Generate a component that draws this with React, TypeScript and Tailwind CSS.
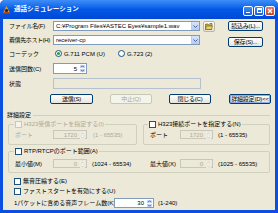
import React from 'react';

const FONT = "font-['Liberation_Sans','Noto_Sans_CJK_JP',sans-serif]";

const XPButton: React.FC<{ w: string; disabled?: boolean; focused?: boolean; children: React.ReactNode }> = ({ w, disabled, focused, children }) => (
  <div
    className={`${w} h-[10px] rounded-[2px] border flex items-center justify-center text-[6px] leading-none whitespace-nowrap tracking-[-0.2px] ${
      disabled
        ? 'border-[#C9C7BA] bg-[#F5F4EA] text-[#ACA899]'
        : focused
          ? 'border-[#003C74] bg-gradient-to-b from-[#FFFFFF] to-[#E3E2DA] text-black shadow-[inset_0_0_0_1px_#8FAEEA]'
          : 'border-[#003C74] bg-gradient-to-b from-[#FFFFFF] to-[#E6E5DE] text-black'
    }`}
  >
    {children}
  </div>
);

const Combo: React.FC<{ value: string }> = ({ value }) => (
  <div className="w-[147px] h-[10px] border border-[#7F9DB9] bg-white flex items-center">
    <span className="flex-1 pl-[2px] text-[6px] leading-none whitespace-nowrap overflow-hidden">{value}</span>
    <div className="w-[8px] h-full bg-gradient-to-b from-[#D8E4FC] to-[#B4CAF6] border-l border-[#B9CBF3] flex items-center justify-center">
      <svg width="5" height="3" viewBox="0 0 5 3">
        <path d="M0.5 0.5 L2.5 2.5 L4.5 0.5" fill="none" stroke="#4D6185" strokeWidth="1" />
      </svg>
    </div>
  </div>
);

const Spin: React.FC<{ value: string; w: string; disabled?: boolean; h?: string }> = ({ value, w, disabled, h = 'h-[9px]' }) => (
  <div className={`${w} ${h} border flex ${disabled ? 'border-[#C9C7BA] bg-[#ECE9D8]' : 'border-[#7F9DB9] bg-white'}`}>
    <span className={`flex-1 pr-[2px] text-right text-[6px] leading-none self-center ${disabled ? 'text-[#ACA899]' : 'text-black'}`}>{value}</span>
    <div className="w-[7px] flex flex-col gap-px p-px">
      {['M1 3 L3 1 L5 3', 'M1 1 L3 3 L5 1'].map((d) => (
        <div
          key={d}
          className={`flex-1 rounded-[1px] flex items-center justify-center ${disabled ? 'bg-[#F2F1EA]' : 'bg-[#C6D5F7]'}`}
        >
          <svg width="5" height="3" viewBox="0 0 6 4">
            <path d={d} fill="none" stroke={disabled ? '#C9C7BA' : '#4D6185'} strokeWidth="1.2" />
          </svg>
        </div>
      ))}
    </div>
  </div>
);

const Check: React.FC<{ label: string; disabled?: boolean }> = ({ label, disabled }) => (
  <div className="flex items-center gap-[2px] h-[8px]">
    <div className={`w-[7px] h-[7px] border ${disabled ? 'border-[#CAC8BB] bg-[#F5F4EA]' : 'border-[#1C5180] bg-white'}`} />
    <span className={`text-[6px] leading-none whitespace-nowrap ${disabled ? 'text-[#ACA899]' : 'text-black'}`}>{label}</span>
  </div>
);

const Radio: React.FC<{ label: string; checked?: boolean }> = ({ label, checked }) => (
  <div className="flex items-center gap-[2px]">
    <div className="w-[7px] h-[7px] rounded-full border border-[#1C5180] bg-white flex items-center justify-center">
      {checked && <div className="w-[3px] h-[3px] rounded-full bg-[#21A121]" />}
    </div>
    <span className="text-[6px] leading-none whitespace-nowrap">{label}</span>
  </div>
);

const TitleButton: React.FC<{ kind: 'min' | 'max' | 'close' }> = ({ kind }) => (
  <div
    className={`w-[10px] h-[10px] rounded-[2px] border border-white flex items-center justify-center ${
      kind === 'close' ? 'bg-gradient-to-b from-[#E87A5E] to-[#C7401F]' : 'bg-gradient-to-b from-[#3C8CF8] to-[#1A5FE0]'
    }`}
  >
    {kind === 'min' && <div className="w-[4px] h-px mt-[4px] bg-white" />}
    {kind === 'max' && <div className="w-[5px] h-[5px] border border-white border-t-2" />}
    {kind === 'close' && (
      <svg width="6" height="6" viewBox="0 0 6 6">
        <path d="M1 1 L5 5 M5 1 L1 5" stroke="white" strokeWidth="1.3" />
      </svg>
    )}
  </div>
);

export default function App() {
  return (
    <div className={`w-[278px] h-[213px] flex flex-col rounded-t-[5px] overflow-hidden bg-[#0A4FE0] ${FONT} text-black`}>
      {/* title bar */}
      <div className="h-[19px] flex items-center bg-gradient-to-b from-[#3D8EF8] via-[#0258E6] to-[#0048D6]">
        <svg className="ml-[2px]" width="9" height="9" viewBox="0 0 9 9">
          <path d="M1 8 L4.5 1 L8 8 Z" fill="#F19A1E" />
          <circle cx="4.5" cy="5.5" r="1.6" fill="#222" />
          <rect x="1" y="7" width="7" height="1.5" fill="#B84A0B" />
        </svg>
        <span className="ml-[3px] text-[6.5px] font-bold text-white leading-none">通話シミュレーション</span>
        <div className="ml-auto mr-[3px] mt-[2px] flex gap-px">
          <TitleButton kind="min" />
          <TitleButton kind="max" />
          <TitleButton kind="close" />
        </div>
      </div>

      {/* body */}
      <div className="flex-1 mx-[3px] mb-[3px] bg-[#ECE9D8] flex flex-col text-[6px] leading-none">
        <div className="flex">
          <div className="flex flex-col ml-[6px] mt-[2px] w-[206px]">
            <div className="flex items-start h-[11px]">
              <span className="w-[44px] h-[10px] flex items-center whitespace-nowrap tracking-[-0.2px]">ファイル名(F)</span>
              <Combo value="C:¥Program Files¥ASTEC Eyes¥sample1.wav" />
              <div className="ml-[3px] w-[12px] h-[11px] rounded-[2px] border border-[#B9B6A6] bg-gradient-to-b from-white to-[#E4E2D8] flex items-center justify-center">
                <svg width="8" height="7" viewBox="0 0 8 7">
                  <path d="M0.5 1 H3 L3.7 1.8 H6.5 V6.5 H0.5 Z" fill="#C9A826" stroke="#6B5A10" strokeWidth="0.6" />
                  <path d="M1.5 3 H7.5 L6.5 6.5 H0.5 Z" fill="#E9D36A" stroke="#6B5A10" strokeWidth="0.6" />
                  <path d="M4.5 0.5 L7 0.5 L7 2.5" fill="none" stroke="#2A8A2A" strokeWidth="0.8" />
                </svg>
              </div>
            </div>
            <div className="flex items-center h-[10px] mt-[3px]">
              <span className="w-[44px] whitespace-nowrap tracking-[-0.4px]">着信先ホスト(H)</span>
              <Combo value="receiver-cp" />
            </div>
            <div className="flex items-center h-[9px] mt-[4px]">
              <span className="w-[46px] whitespace-nowrap">コーデック</span>
              <div className="w-[63px]">
                <Radio label="G.711 PCM (U)" checked />
              </div>
              <Radio label="G.723 (2)" />
            </div>
            <div className="flex items-center h-[11px] mt-[5px]">
              <span className="w-[44px] whitespace-nowrap">送信回数(C)</span>
              <Spin value="5" w="w-[34px]" h="h-[11px]" />
            </div>
            <div className="flex items-center h-[11px] mt-[4px]">
              <span className="w-[44px] whitespace-nowrap">状態</span>
              <div className="w-[148px] h-[11px] border border-[#B5C1CF] bg-[#ECE9D8]" />
            </div>
          </div>
          <div className="flex flex-col ml-[13px] mt-[2px]">
            <XPButton w="w-[35px]">読込み(L)...</XPButton>
            <div className="h-[6px]" />
            <XPButton w="w-[35px]">保存(S)...</XPButton>
          </div>
        </div>

        <div className="flex ml-[47px] mt-[5px]">
          <XPButton w="w-[43px]">送信(S)</XPButton>
          <div className="ml-[17px]">
            <XPButton w="w-[42px]" disabled>中止(Q)</XPButton>
          </div>
          <div className="ml-[17px]">
            <XPButton w="w-[42px]">閉じる(C)</XPButton>
          </div>
          <div className="ml-[18px]">
            <XPButton w="w-[42px]" focused>詳細設定(D)&lt;&lt;</XPButton>
          </div>
        </div>

        <div className="flex items-center h-[8px] mt-[7px]">
          <span className="ml-[4px] whitespace-nowrap">詳細設定</span>
          <div className="flex-1 h-px bg-[#D0D0BF] ml-[2px] mr-[5px]" />
        </div>

        <div className="flex ml-[5px] mt-[5px] gap-[6px]">
          <div className="w-[129px] h-[21px] border border-[#D0D0BF] rounded-[2px] flex flex-col">
            <div className="-mt-[5px] ml-[5px] px-px w-fit bg-[#ECE9D8]">
              <Check label="H323受信ポートを指定する(I)" disabled />
            </div>
            <div className="flex items-center h-[9px] mt-[2px] ml-[6px]">
              <span className="w-[38px] text-[#ACA899]">ポート</span>
              <Spin value="1720" w="w-[34px]" disabled />
              <span className="ml-[6px] text-[#ACA899] whitespace-nowrap">(1 - 65535)</span>
            </div>
          </div>
          <div className="w-[127px] h-[21px] border border-[#D0D0BF] rounded-[2px] flex flex-col">
            <div className="-mt-[5px] ml-[4px] px-px w-fit bg-[#ECE9D8]">
              <Check label="H323接続ポートを指定する(N)" />
            </div>
            <div className="flex items-center h-[9px] mt-[2px] ml-[6px]">
              <span className="w-[30px]">ポート</span>
              <Spin value="1720" w="w-[33px]" disabled />
              <span className="ml-[5px] whitespace-nowrap">(1 - 65535)</span>
            </div>
          </div>
        </div>

        <div className="w-[262px] h-[22px] ml-[5px] mt-[6px] border border-[#D0D0BF] rounded-[2px] flex flex-col">
          <div className="-mt-[5px] ml-[5px] px-px w-fit bg-[#ECE9D8]">
            <Check label="RTP/RTCPのポート範囲(A)" />
          </div>
          <div className="flex items-center h-[9px] mt-[4px] ml-[6px]">
            <span className="w-[38px] whitespace-nowrap">最小値(M)</span>
            <Spin value="0" w="w-[34px]" disabled />
            <span className="ml-[5px] w-[58px] whitespace-nowrap">(1024 - 65534)</span>
            <span className="w-[30px] whitespace-nowrap">最大値(X)</span>
            <Spin value="0" w="w-[33px]" disabled />
            <span className="ml-[5px] whitespace-nowrap">(1025 - 65535)</span>
          </div>
        </div>

        <div className="ml-[11px] mt-[4px]">
          <Check label="無音圧縮する(E)" />
        </div>
        <div className="ml-[11px] mt-[2px]">
          <Check label="ファストスタートを有効にする(U)" />
        </div>
        <div className="flex items-center ml-[11px] mt-[3px] h-[10px]">
          <span className="w-[100px] whitespace-nowrap">1パケットに含める音声フレーム数(K)</span>
          <Spin value="30" w="w-[40px]" h="h-[10px]" />
          <span className="ml-[4px] whitespace-nowrap">(1-240)</span>
        </div>
      </div>
    </div>
  );
}
